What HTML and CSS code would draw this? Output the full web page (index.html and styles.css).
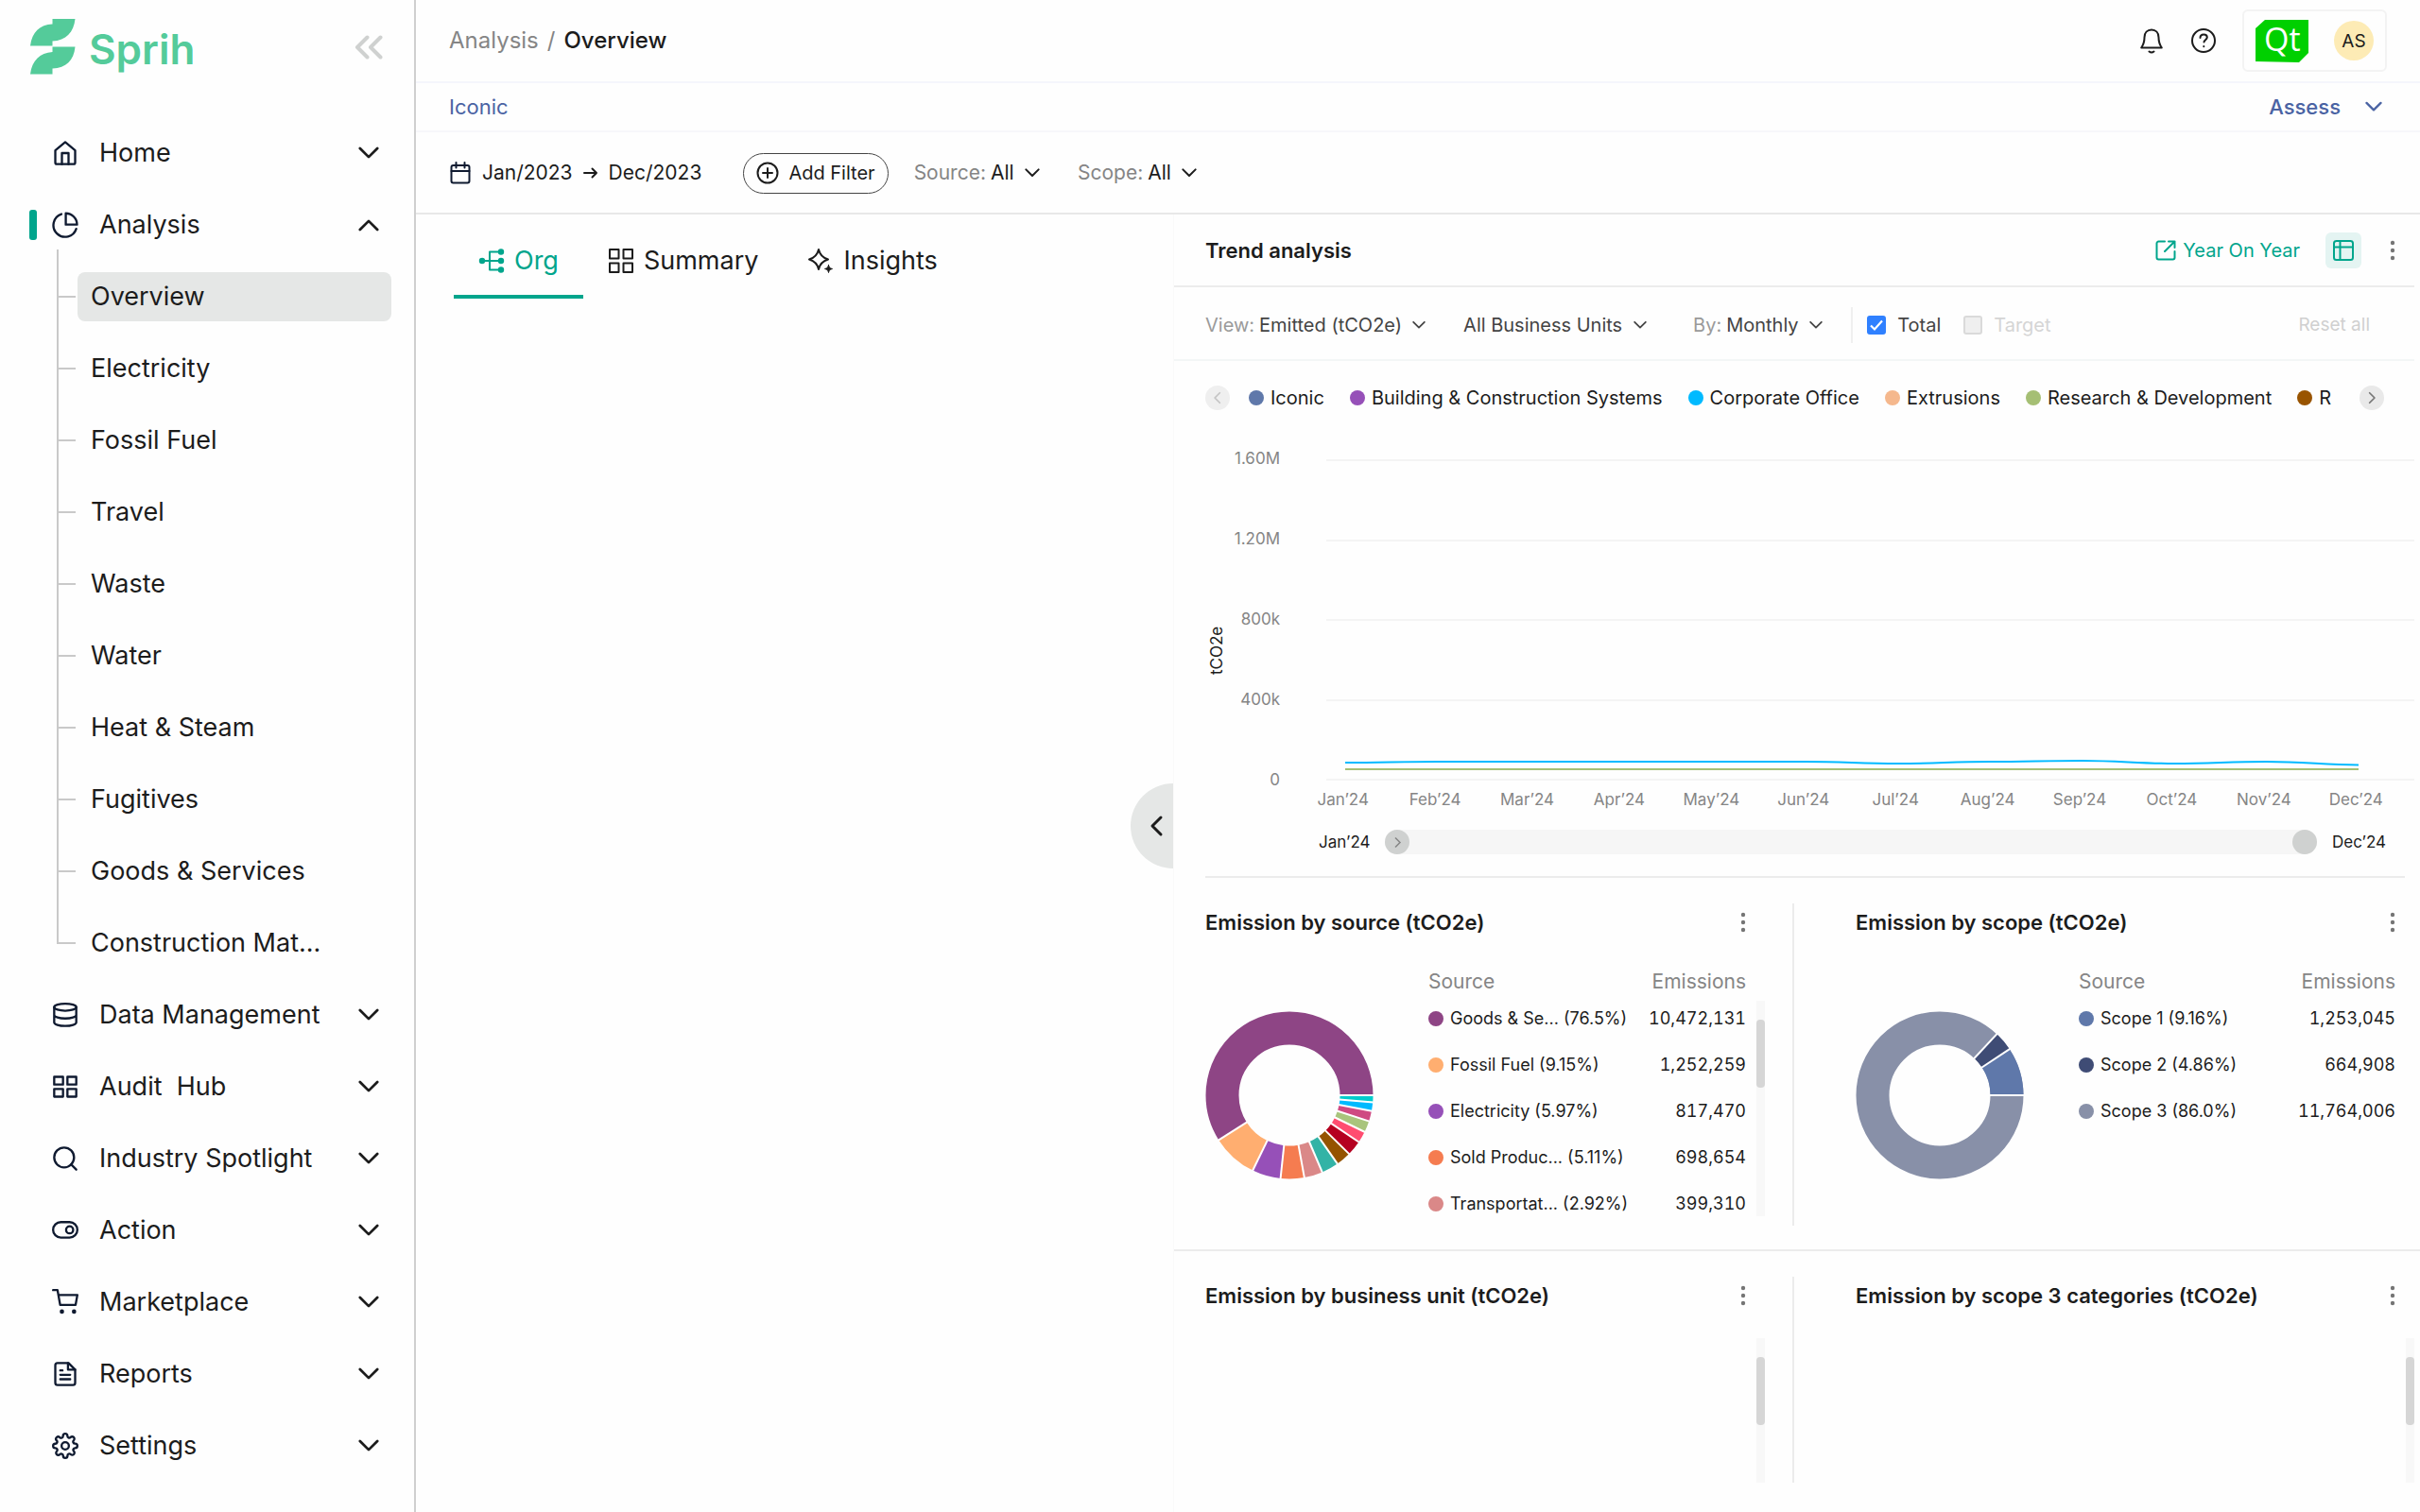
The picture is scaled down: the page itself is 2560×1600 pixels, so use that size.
FILE: index.html
```html
<!DOCTYPE html>
<html lang="en">
<head>
<meta charset="utf-8">
<meta name="viewport" content="width=device-width, initial-scale=1">
<title>Sprih – Analysis Overview</title>
<link rel="stylesheet" href="styles.css">
</head>
<body>
<svg class="sprite" aria-hidden="true">
  <symbol id="chev" viewBox="0 0 24 24"><path d="M2 6.500l10 10 10-10"/></symbol>
  <symbol id="chev-up" viewBox="0 0 24 24"><path d="M2 17.500l10-10 10 10"/></symbol>
  <symbol id="chev-right" viewBox="0 0 24 24"><path d="M8 3l9 9-9 9"/></symbol>
  <symbol id="chev-left" viewBox="0 0 24 24"><path d="M16 3l-9 9 9 9"/></symbol>
  <symbol id="grid" viewBox="0 0 24 24"><path d="M2 3h8v7H2zM14 3h8v7h-8zM14 14h8v7h-8zM2 14h8v7H2z"/></symbol>
  <symbol id="dots" viewBox="0 0 8 24"><g fill="currentColor" stroke="none"><circle cx="4" cy="4" r="2.200"/><circle cx="4" cy="12" r="2.200"/><circle cx="4" cy="20" r="2.200"/></g></symbol>
</svg>
<div class="app">
  <aside class="sidebar">
    <div class="brand">
      <a class="logo" href="#">
        <svg class="logo-mark" viewBox="0 0 48 60" aria-hidden="true"><path d="M0 28.500C2 14 10 6 23.500 5.500V0H47.500C46 14 38 23 23.500 23.500V28.500Z"/><path d="M0 58.500C2 44 10 36 23.500 35V29.500H47.500C46 44 38 52 23.500 52.500V58.500Z"/></svg>
        <span>Sprih</span>
      </a>
      <button class="icon-btn collapse" aria-label="Collapse menu"><svg viewBox="0 0 30 26"><path d="M13.500 2.500L3 13l10.500 10.500M27.500 2.500L17 13l10.500 10.500"/></svg></button>
    </div>
    <nav>
      <ul class="nav">
        <li><a class="nav-row" href="#"><svg class="ni" viewBox="0 0 24 24"><path d="M3 9.500L12 2l9 7.500v11a1.500 1.500 0 0 1-1.500 1.500h-15A1.500 1.500 0 0 1 3 20.500z"/><path d="M9 22V12h6v10"/></svg><span>Home</span><svg class="nc"><use href="#chev"/></svg></a></li>
        <li>
          <a class="nav-row active" href="#"><svg class="ni" viewBox="0 0 24 24"><path d="M22 15.500A10.600 10.600 0 1 1 8.500 2.200"/><path d="M12.500 1.500A10.200 10.200 0 0 1 22.700 11.700H12.500z"/></svg><span>Analysis</span><svg class="nc"><use href="#chev-up"/></svg></a>
          <ul class="sub">
            <li><a class="current" href="#">Overview</a></li>
            <li><a href="#">Electricity</a></li>
            <li><a href="#">Fossil Fuel</a></li>
            <li><a href="#">Travel</a></li>
            <li><a href="#">Waste</a></li>
            <li><a href="#">Water</a></li>
            <li><a href="#">Heat &amp; Steam</a></li>
            <li><a href="#">Fugitives</a></li>
            <li><a href="#">Goods &amp; Services</a></li>
            <li><a href="#">Construction Mat...</a></li>
          </ul>
        </li>
        <li><a class="nav-row" href="#"><svg class="ni" viewBox="0 0 24 24"><ellipse cx="12" cy="5" rx="10" ry="3.200"/><path d="M22 12c0 1.700-4.500 3.200-10 3.200S2 13.700 2 12M2 5v13.800c0 1.700 4.500 3.200 10 3.200s10-1.500 10-3.200V5"/></svg><span>Data Management</span><svg class="nc"><use href="#chev"/></svg></a></li>
        <li><a class="nav-row" href="#"><svg class="ni"><use href="#grid"/></svg><span class="keep">Audit  Hub</span><svg class="nc"><use href="#chev"/></svg></a></li>
        <li><a class="nav-row" href="#"><svg class="ni" viewBox="0 0 24 24"><circle cx="11" cy="11" r="9"/><path d="M22 22l-4.700-4.700"/></svg><span>Industry Spotlight</span><svg class="nc"><use href="#chev"/></svg></a></li>
        <li><a class="nav-row" href="#"><svg class="ni" viewBox="0 0 24 24"><rect x="1" y="4.500" width="22" height="14" rx="7"/><circle cx="16" cy="11.500" r="3.200"/></svg><span>Action</span><svg class="nc"><use href="#chev"/></svg></a></li>
        <li><a class="nav-row" href="#"><svg class="ni" viewBox="0 0 24 24"><path d="M1 1h4l2.400 13.500h14L23 5.500H6"/><circle cx="9" cy="20.500" r="1"/><circle cx="20" cy="20.500" r="1"/></svg><span>Marketplace</span><svg class="nc"><use href="#chev"/></svg></a></li>
        <li><a class="nav-row" href="#"><svg class="ni" viewBox="0 0 24 24"><path d="M15 2H5a2 2 0 0 0-2 2v16a2 2 0 0 0 2 2h14a2 2 0 0 0 2-2V8z"/><path d="M14.500 2v6H21M16.500 12.700h-9M16.500 16.700h-9M9.500 8.700h-2"/></svg><span>Reports</span><svg class="nc"><use href="#chev"/></svg></a></li>
        <li><a class="nav-row" href="#"><svg class="ni" viewBox="0 0 24 24"><circle cx="12" cy="12" r="3.300"/><path d="M19.400 15a1.650 1.650 0 0 0 .33 1.820l.06.060a2 2 0 1 1-2.830 2.830l-.06-.060a1.650 1.650 0 0 0-1.820-.33 1.650 1.650 0 0 0-1 1.510V21a2 2 0 0 1-4 0v-.09A1.650 1.650 0 0 0 9 19.400a1.650 1.650 0 0 0-1.820.33l-.06.060a2 2 0 1 1-2.830-2.830l.06-.060a1.650 1.650 0 0 0 .33-1.820 1.650 1.650 0 0 0-1.510-1H3a2 2 0 0 1 0-4h.09A1.650 1.650 0 0 0 4.600 9a1.650 1.650 0 0 0-.33-1.820l-.06-.060a2 2 0 1 1 2.830-2.830l.06.060a1.650 1.650 0 0 0 1.820.33H9a1.650 1.650 0 0 0 1-1.510V3a2 2 0 0 1 4 0v.09a1.650 1.650 0 0 0 1 1.510 1.650 1.650 0 0 0 1.820-.33l.06-.060a2 2 0 1 1 2.830 2.830l-.06.060a1.650 1.650 0 0 0-.33 1.820V9a1.650 1.650 0 0 0 1.510 1H21a2 2 0 0 1 0 4h-.09a1.650 1.650 0 0 0-1.510 1z"/></svg><span>Settings</span><svg class="nc"><use href="#chev"/></svg></a></li>
      </ul>
    </nav>
  </aside>

  <main class="main">
    <header class="topbar">
      <div class="crumbs"><a href="#">Analysis</a><span class="slash">/</span><span class="here">Overview</span></div>
      <div class="top-tools">
        <button class="icon-btn" aria-label="Notifications"><svg class="i28" viewBox="0 0 28 28"><path d="M14 2.500c-4.500 0-7.500 3.200-7.500 8 0 5-1.200 8-3.300 11h21.600c-2.100-3-3.300-6-3.300-11 0-4.800-3-8-7.500-8z"/><path d="M11.500 25.500q2.500 2 5 0"/></svg></button>
        <button class="icon-btn" aria-label="Help"><svg class="i28" viewBox="0 0 28 28"><circle cx="14" cy="14" r="12"/><path d="M10.500 11c0-2.200 1.600-3.600 3.700-3.600s3.600 1.300 3.600 3.200c0 2.400-3.300 2.900-3.300 5M14.300 20v.200"/></svg></button>
        <div class="account">
          <svg class="qt" viewBox="0 0 56 45" role="img" aria-label="Qt"><path fill="#00d000" d="M10 0H56V35L46 45L0 44V9Z"/><text x="9" y="33" font-size="34" fill="#fff">Qt</text></svg>
          <span class="avatar">AS</span>
        </div>
      </div>
    </header>
    <div class="entity">
      <a href="#">Iconic</a>
      <button class="assess">Assess<svg class="c18"><use href="#chev"/></svg></button>
    </div>
    <div class="filters">
      <button class="date"><svg class="cal" viewBox="0 0 24 24"><rect x="2.500" y="4" width="19" height="18.500" rx="2"/><path d="M2.500 10h19M7.500 1v5.500M16.500 1v5.500"/></svg><span>Jan/2023</span><svg class="arrow" viewBox="0 0 16 14"><path d="M1 7h13M9.500 2.500L14 7l-4.500 4.500"/></svg><span>Dec/2023</span></button>
      <button class="add"><svg class="i24" viewBox="0 0 24 24"><circle cx="12" cy="12" r="10.500"/><path d="M12 7v10M7 12h10"/></svg>Add Filter</button>
      <label class="pick dark"><span>Source:</span><select><option>All</option></select><svg class="c16"><use href="#chev"/></svg></label>
      <label class="pick dark"><span>Scope:</span><select><option>All</option></select><svg class="c16"><use href="#chev"/></svg></label>
    </div>

    <div class="body">
      <section class="left">
        <div class="tabs" role="tablist">
          <button class="tab on" role="tab" aria-selected="true"><svg class="i28" viewBox="0 0 28 28"><path d="M4 14h20M22 4.500H12v19h10"/><g fill="currentColor"><circle cx="4" cy="14" r="2.200"/><circle cx="24" cy="4.500" r="2.200"/><circle cx="24" cy="14" r="2.200"/><circle cx="24" cy="23.500" r="2.200"/></g></svg>Org</button>
          <button class="tab" role="tab" aria-selected="false"><svg class="i28" viewBox="0 0 28 28"><path d="M2 2h9.500v9.500H2zM16.500 2H26v9.500h-9.500zM16.500 16.500H26V26h-9.500zM2 16.500h9.500V26H2z"/></svg>Summary</button>
          <button class="tab" role="tab" aria-selected="false"><svg class="i28" viewBox="0 0 28 28"><path d="M12 2c1.300 6 4 8.700 10 10.500-6 1.800-8.700 4.500-10 10.500-1.300-6-4-8.700-10-10.500C8 10.700 10.700 8 12 2z"/><path fill="currentColor" stroke-width="1" d="M22.500 18.500c.5 2.600 1.400 3.500 4 4-2.600.5-3.500 1.400-4 4-.5-2.600-1.400-3.500-4-4 2.600-.5 3.500-1.400 4-4z"/></svg>Insights</button>
        </div>
        <button class="handle" aria-label="Collapse panel"><svg class="i24"><use href="#chev-left"/></svg></button>
      </section>

      <section class="right">
        <div class="trend-head">
          <h2>Trend analysis</h2>
          <a class="yoy" href="#"><svg class="i24" viewBox="0 0 24 24"><path d="M11 2.500H4.500a2 2 0 0 0-2 2v15a2 2 0 0 0 2 2h15a2 2 0 0 0 2-2V13M15 2.500h6.500V9M21.500 2.500L11 13"/></svg>Year On Year</a>
          <button class="table-btn" aria-label="Table view"><svg class="i24" viewBox="0 0 24 24"><rect x="2" y="2" width="20" height="20" rx="2.500"/><path d="M2 8.500h20M8.500 2v20"/></svg></button>
          <button class="icon-btn more" aria-label="More"><svg class="dots"><use href="#dots"/></svg></button>
        </div>
        <div class="controls">
          <label class="pick"><span>View:</span><select><option>Emitted (tCO2e)</option></select><svg class="c14"><use href="#chev"/></svg></label>
          <label class="pick"><select aria-label="Business units"><option>All Business Units</option></select><svg class="c14"><use href="#chev"/></svg></label>
          <label class="pick by"><span>By:</span><select><option>Monthly</option></select><svg class="c14"><use href="#chev"/></svg></label>
          <div class="checks">
            <label class="check"><input type="checkbox" checked>Total</label>
            <label class="check off"><input type="checkbox" disabled>Target</label>
          </div>
          <button class="reset" disabled>Reset all</button>
        </div>
        <div class="legend">
          <button class="round dim" aria-label="Previous"><svg class="c14"><use href="#chev-left"/></svg></button>
          <ul>
            <li><i class="dot c-iconic"></i>Iconic</li>
            <li><i class="dot c-build"></i>Building &amp; Construction Systems</li>
            <li><i class="dot c-corp"></i>Corporate Office</li>
            <li><i class="dot c-extr"></i>Extrusions</li>
            <li><i class="dot c-rd"></i>Research &amp; Development</li>
            <li><i class="dot c-r"></i>R</li>
          </ul>
          <button class="round" aria-label="Next"><svg class="c14"><use href="#chev-right"/></svg></button>
        </div>

        <div class="chart">
          <div class="axis-title">tCO2e</div>
          <div class="y-axis"><span>1.60M</span><span>1.20M</span><span>800k</span><span>400k</span><span>0</span></div>
          <div class="plot">
            <div class="grid-lines"><i></i><i></i><i></i><i></i></div>
            <svg class="series" viewBox="0 0 1100 340" preserveAspectRatio="none" aria-hidden="true">
              <path stroke="#a5bf74" d="M0 328H1100"/>
              <path stroke="#00baff" d="M0 321C40 321 60 320 100 320H500C540 320 560 322 600 322S660 320 700 320S760 319 800 319S860 322 900 322S960 320 1000 320S1060 323 1100 323.500"/>
            </svg>
          </div>
        </div>
        <div class="x-axis"><span>Jan’24</span><span>Feb’24</span><span>Mar’24</span><span>Apr’24</span><span>May’24</span><span>Jun’24</span><span>Jul’24</span><span>Aug’24</span><span>Sep’24</span><span>Oct’24</span><span>Nov’24</span><span>Dec’24</span></div>
        <div class="range">
          <label for="from">Jan’24</label>
          <div class="sliders">
            <input id="from" class="from" type="range" min="0" max="11" value="0">
            <input id="to" type="range" min="0" max="11" value="11">
          </div>
          <label for="to">Dec’24</label>
        </div>

        <div class="cards">
          <article class="card">
            <header><h2>Emission by source (tCO2e)</h2><button class="icon-btn" aria-label="More"><svg class="dots"><use href="#dots"/></svg></button></header>
            <div class="card-body">
              <svg class="donut" viewBox="-89 -89 178 178" aria-hidden="true">
                <g class="ring">
                  <circle r="71" pathLength="3600" stroke="#8e4585" stroke-dasharray="2124 3600" stroke-dashoffset="-1476"/>
                  <circle r="71" pathLength="3600" stroke="#ffae70" stroke-dasharray="316 3600" stroke-dashoffset="-1160"/>
                  <circle r="71" pathLength="3600" stroke="#9650b8" stroke-dasharray="199 3600" stroke-dashoffset="-961"/>
                  <circle r="71" pathLength="3600" stroke="#f57c50" stroke-dasharray="164 3600" stroke-dashoffset="-797"/>
                  <circle r="71" pathLength="3600" stroke="#da8888" stroke-dasharray="128 3600" stroke-dashoffset="-669"/>
                  <circle r="71" pathLength="3600" stroke="#33b3a6" stroke-dasharray="119 3600" stroke-dashoffset="-550"/>
                  <circle r="71" pathLength="3600" stroke="#955300" stroke-dasharray="105 3600" stroke-dashoffset="-445"/>
                  <circle r="71" pathLength="3600" stroke="#b50020" stroke-dasharray="105 3600" stroke-dashoffset="-340"/>
                  <circle r="71" pathLength="3600" stroke="#ff4d70" stroke-dasharray="80 3600" stroke-dashoffset="-260"/>
                  <circle r="71" pathLength="3600" stroke="#a9c47c" stroke-dasharray="79 3600" stroke-dashoffset="-181"/>
                  <circle r="71" pathLength="3600" stroke="#cf4a82" stroke-dasharray="72 3600" stroke-dashoffset="-109"/>
                  <circle r="71" pathLength="3600" stroke="#00baff" stroke-dasharray="61 3600" stroke-dashoffset="-48"/>
                  <circle r="71" pathLength="3600" stroke="#00cccc" stroke-dasharray="48 3600"/>
                </g>
                <g class="cuts">
                  <path d="M53 0H89"/><path transform="rotate(4.800)" d="M53 0H89"/><path transform="rotate(10.900)" d="M53 0H89"/><path transform="rotate(18.100)" d="M53 0H89"/><path transform="rotate(26)" d="M53 0H89"/><path transform="rotate(34)" d="M53 0H89"/><path transform="rotate(44.500)" d="M53 0H89"/><path transform="rotate(55)" d="M53 0H89"/><path transform="rotate(66.900)" d="M53 0H89"/><path transform="rotate(79.700)" d="M53 0H89"/><path transform="rotate(96.100)" d="M53 0H89"/><path transform="rotate(116)" d="M53 0H89"/><path transform="rotate(147.600)" d="M53 0H89"/>
                </g>
              </svg>
              <table>
                <thead><tr><th>Source</th><th>Emissions</th></tr></thead>
                <tbody>
                  <tr><td><i class="dot c-goods"></i>Goods &amp; Se... (76.5%)</td><td>10,472,131</td></tr>
                  <tr><td><i class="dot c-fossil"></i>Fossil Fuel (9.15%)</td><td>1,252,259</td></tr>
                  <tr><td><i class="dot c-build"></i>Electricity (5.97%)</td><td>817,470</td></tr>
                  <tr><td><i class="dot c-sold"></i>Sold Produc... (5.11%)</td><td>698,654</td></tr>
                  <tr><td><i class="dot c-trans"></i>Transportat... (2.92%)</td><td>399,310</td></tr>
                </tbody>
              </table>
              <div class="scroll"><i></i></div>
            </div>
          </article>
          <article class="card">
            <header><h2>Emission by scope (tCO2e)</h2><button class="icon-btn" aria-label="More"><svg class="dots"><use href="#dots"/></svg></button></header>
            <div class="card-body">
              <svg class="donut" viewBox="-89 -89 178 178" aria-hidden="true">
                <g class="ring">
                  <circle r="71" stroke="#8890a8"/>
                  <circle r="71" pathLength="3600" stroke="#5f78aa" stroke-dasharray="335 3600" stroke-dashoffset="-3265"/>
                  <circle r="71" pathLength="3600" stroke="#3f4c75" stroke-dasharray="135 3600" stroke-dashoffset="-3130"/>
                </g>
                <g class="cuts"><path d="M53 0H89"/><path transform="rotate(-33.500)" d="M53 0H89"/><path transform="rotate(-47)" d="M53 0H89"/></g>
              </svg>
              <table>
                <thead><tr><th>Source</th><th>Emissions</th></tr></thead>
                <tbody>
                  <tr><td><i class="dot c-iconic"></i>Scope 1 (9.16%)</td><td>1,253,045</td></tr>
                  <tr><td><i class="dot c-s2"></i>Scope 2 (4.86%)</td><td>664,908</td></tr>
                  <tr><td><i class="dot c-s3"></i>Scope 3 (86.0%)</td><td>11,764,006</td></tr>
                </tbody>
              </table>
            </div>
          </article>
        </div>
        <div class="cards low">
          <article class="card">
            <header><h2>Emission by business unit (tCO2e)</h2><button class="icon-btn" aria-label="More"><svg class="dots"><use href="#dots"/></svg></button></header>
            <div class="card-body"><div class="scroll"><i></i></div></div>
          </article>
          <article class="card">
            <header><h2>Emission by scope 3 categories (tCO2e)</h2><button class="icon-btn" aria-label="More"><svg class="dots"><use href="#dots"/></svg></button></header>
            <div class="card-body"><div class="scroll"><i></i></div></div>
          </article>
        </div>
      </section>
    </div>
  </main>
</div>
</body>
</html>
```
FILE: styles.css
```css
* { box-sizing: border-box; }
body {
  margin: 0;
  background: #fefefe;
  color: #1c1c1c;
  font: 400 20px/28px Inter, "Liberation Sans", sans-serif;
}
ul { list-style: none; margin: 0; padding: 0; }
a { color: inherit; text-decoration: none; }
button, select, input { font: inherit; color: inherit; margin: 0; }
button { background: none; border: 0; padding: 0; display: flex; align-items: center; }
h2 { margin: 0; font-size: 22px; line-height: 28px; font-weight: 600; white-space: nowrap; }
svg { display: block; flex: none; fill: none; stroke: currentColor; stroke-width: 2; stroke-linecap: round; stroke-linejoin: round; }
.sprite { width: 0; height: 0; position: absolute; }

.i24 { width: 24px; height: 24px; }
.i28 { width: 28px; height: 28px; }
.c14 { width: 14px; height: 14px; stroke-width: 3; }
.c16 { width: 16px; height: 16px; stroke-width: 3; }
.c18 { width: 18px; height: 18px; stroke-width: 3; }
.dots { width: 8px; height: 24px; color: #757575; }

.app { display: grid; grid-template-columns: 440px minmax(0, 1fr); min-height: 100vh; }

/* Sidebar */
.sidebar { border-right: 2px solid #cfcfcf; }
.brand { height: 124px; padding: 20px 32px 0; display: flex; align-items: flex-start; justify-content: space-between; }
.logo { display: flex; gap: 14px; color: #54cb9a; font-size: 44px; line-height: 64px; font-weight: 600; }
.logo-mark { width: 48px; height: 60px; fill: #54cb9a; stroke: none; }
.collapse { color: #cfd1d0; margin: 17px 1px 0 0; }
.collapse svg { width: 30px; height: 26px; stroke-width: 4; }
.nav-row { height: 76px; display: flex; align-items: center; gap: 22px; padding: 0 37px 0 55px; font-size: 27px; line-height: 32px; }
.nav-row span { flex: 1; white-space: nowrap; }
.nav-row .keep { white-space: pre; }
.nav-row.active { padding-left: 31px; }
.nav-row.active::before { content: ""; width: 8px; height: 32px; border-radius: 3px; background: #00a58c; margin-right: -6px; }
.ni { width: 28px; height: 28px; color: #0f1a30; }
.nc { width: 22px; height: 22px; stroke-width: 3; }
.sub { margin: -12px 0 0 60px; padding-top: 12px; background: linear-gradient(#c9c9c9, #c9c9c9) 0 0 / 2px 12px no-repeat; }
.sub li {
  height: 76px;
  padding: 12px 24px 12px 22px;
  background: linear-gradient(#c9c9c9, #c9c9c9) 0 0 / 2px 100% no-repeat, linear-gradient(#c9c9c9, #c9c9c9) 0 50% / 20px 2px no-repeat;
}
.sub li:last-child { background-size: 2px 50%, 20px 2px; }
.sub a { display: block; padding: 10px 14px; border-radius: 8px; font-size: 27px; line-height: 32px; }
.sub .current { background: #e5e7e6; }

/* Header bars */
.main { display: flex; flex-direction: column; min-width: 0; }
.topbar { height: 88px; padding: 0 35px; border-bottom: 2px solid #f5f6fc; display: flex; align-items: center; justify-content: space-between; }
.crumbs { display: flex; gap: 9px; font-size: 24px; color: #858585; }
.crumbs .here { color: #1c1c1c; font-weight: 500; }
.top-tools { display: flex; align-items: center; gap: 27px; }
.account { height: 66px; width: 153px; padding: 0 12px; border: 2px solid #f3f3f3; border-radius: 6px; display: flex; align-items: center; justify-content: space-between; }
.qt { width: 56px; height: 45px; stroke: none; overflow: visible; font-family: "Open Sans", sans-serif; line-height: 1; }
.avatar { width: 42px; height: 42px; border-radius: 50%; background: #fdebb5; font-size: 19px; line-height: 44px; text-align: center; }
.entity { height: 52px; padding: 0 40px 0 35px; border-bottom: 2px solid #f7f7fa; display: flex; align-items: center; justify-content: space-between; color: #4a63a3; font-size: 22px; }
.assess { gap: 26px; font-weight: 500; }
.filters { height: 87px; padding: 1px 35px 0; border-bottom: 2px solid #e8e8e8; display: flex; align-items: center; font-size: 21px; }
.date { gap: 11px; margin-right: 44px; }
.cal { width: 24px; height: 24px; color: #0f1a30; }
.arrow { width: 16px; height: 14px; }
.add { height: 43px; padding: 0 13px; gap: 10px; border: 1px solid #444; border-radius: 22px; margin-right: 27px; font-size: 20px; }
.pick { display: flex; align-items: center; margin-right: 40px; color: #444; white-space: nowrap; }
.pick span { color: #9a9a9a; margin-right: 5px; }
.pick.dark { color: #1c1c1c; }
.pick.dark span { color: #858585; }
.pick select { appearance: none; border: 0; background: none; padding: 0; margin-right: 11px; opacity: 1; }

/* Content split */
.body { flex: 1; display: grid; grid-template-columns: minmax(0, 801fr) minmax(0, 1319fr); }
.left { position: relative; }
.tabs { display: flex; padding: 12px 0 0 40px; }
.tab { height: 77px; padding: 0 26px; gap: 10px; font-size: 27px; line-height: 32px; border-bottom: 4px solid transparent; }
.tab.on { color: #00a58c; border-color: #00a58c; }
.handle { position: absolute; right: 0; top: 602px; width: 45px; height: 90px; padding-left: 16px; border-radius: 45px 0 0 45px; background: #e5e7e6; }
.handle svg { stroke-width: 3; }

.right { border-left: 1px solid #fafafa; }
.trend-head { height: 77px; padding: 0 25px 0 33px; margin-right: 6px; border-bottom: 2px solid #ececec; display: flex; align-items: center; }
.trend-head h2 { flex: 1; }
.yoy { display: flex; align-items: center; gap: 6px; color: #00a58c; margin-right: 27px; }
.table-btn { width: 38px; height: 38px; justify-content: center; border-radius: 6px; background: #e4f4f2; color: #00a58c; }
.more { margin-left: 29px; margin-right: -6px; }
.controls { height: 78px; padding: 3px 47px 0 33px; margin-right: 6px; border-bottom: 2px solid #f3f6f6; display: flex; align-items: center; }
.by { margin-left: 9px; margin-right: 30px; }
.checks { display: flex; gap: 24px; padding-left: 15px; border-left: 2px solid #f0f0f0; height: 38px; align-items: center; }
.check { display: flex; align-items: center; gap: 12px; color: #444; }
.check.off { color: #d5d5d5; }
.check input { appearance: none; width: 20px; height: 20px; border-radius: 3px; background: #efefef; border: 2px solid #dadada; }
.check input:checked { border: 0; background: #2f80ff url("data:image/svg+xml,%3Csvg xmlns='http://www.w3.org/2000/svg' viewBox='0 0 20 20'%3E%3Cpath d='M4 10.500l4 4L16 5.500' fill='none' stroke='white' stroke-width='2.200'/%3E%3C/svg%3E"); }
.reset { margin-left: auto; font-size: 19px; color: #d0d0d0; }
.legend { height: 78px; padding: 0 38px 0 33px; display: flex; align-items: center; gap: 20px; }
.legend ul { flex: 1; display: flex; gap: 27px; overflow: hidden; white-space: nowrap; }
.legend li { display: flex; align-items: center; gap: 7px; }
.round { width: 26px; height: 26px; border-radius: 50%; background: #e9e9e9; color: #777; justify-content: center; flex: none; }
.round.dim { background: #efefef; color: #c4c4c4; }
.dot { display: inline-block; width: 16px; height: 16px; border-radius: 50%; flex: none; }
.c-iconic { background: #5f78aa; }
.c-build { background: #9650b8; }
.c-corp { background: #00baff; }
.c-extr { background: #f5b88d; }
.c-rd { background: #a5bf74; }
.c-r { background: #995400; }
.c-goods { background: #8e4585; }
.c-fossil { background: #ffae70; }
.c-sold { background: #f57c50; }
.c-trans { background: #da8888; }
.c-s2 { background: #3f4c75; }
.c-s3 { background: #8890a8; }

/* Trend chart */
.chart { display: grid; grid-template-columns: 28px 51px minmax(0, 1fr); margin-top: 26px; padding: 0 6px 0 33px; }
.axis-title { writing-mode: vertical-rl; transform: rotate(180deg); font-size: 17px; line-height: 24px; padding-top: 112px; }
.y-axis { display: flex; flex-direction: column; justify-content: space-between; align-items: flex-end; margin: -11px 0 -9px; font-size: 17px; line-height: 20px; color: #858585; white-space: nowrap; }
.plot { display: grid; height: 340px; margin-left: 49px; }
.plot > * { grid-area: 1 / 1; }
.grid-lines { display: flex; flex-direction: column; }
.grid-lines i { flex: 1; border-top: 2px solid #f4f4f4; }
.grid-lines i:last-child { border-bottom: 2px solid #f4f4f4; }
.series { width: calc(100% - 79px); height: 340px; margin-left: 20px; stroke-linecap: butt; }
.series path { vector-effect: non-scaling-stroke; }
.x-axis { display: grid; grid-template-columns: repeat(12, minmax(0, 1fr)); margin: 10px 19px 0 130px; font-size: 17px; line-height: 20px; text-align: center; color: #858585; }
.range { display: flex; align-items: center; gap: 16px; margin: 22px 16px 0 33px; padding: 0 20px 23px 120px; border-bottom: 2px solid #ececec; font-size: 17px; line-height: 26px; }
.sliders { flex: 1; display: grid; }
.sliders input { grid-area: 1 / 1; appearance: none; width: 100%; height: 26px; border-radius: 13px; background: none; pointer-events: none; }
.sliders .from { background: #f6f6f6; }
.sliders input::-webkit-slider-thumb { appearance: none; width: 26px; height: 26px; border-radius: 50%; background: #cfd1d0; pointer-events: auto; }
.sliders .from::-webkit-slider-thumb { background: #cfd1d0 url("data:image/svg+xml,%3Csvg xmlns='http://www.w3.org/2000/svg' viewBox='0 0 26 26'%3E%3Cpath d='M11 8.500l5 5-5 5' fill='none' stroke='%23858585' stroke-width='1.500'/%3E%3C/svg%3E"); }

/* Breakdown cards */
.cards { display: grid; grid-template-columns: minmax(0, 656fr) minmax(0, 662fr); margin-top: 27px; padding-bottom: 25px; border-bottom: 2px solid #ececec; }
.card { padding: 0 29px 0 33px; height: 341px; }
.card:first-child { border-right: 2px solid #ececec; }
.card header { display: flex; justify-content: space-between; align-items: center; height: 40px; padding-right: 19px; }
.card + .card { padding: 0 0 0 65px; }
.card + .card header { padding-right: 25px; }
.card-body { display: grid; grid-template-columns: 178px minmax(0, 1fr) 9px; }
.card + .card .card-body { padding-right: 6px; }
.donut { width: 178px; height: 178px; margin-top: 74px; }
.ring { stroke-width: 35; stroke-linecap: butt; }
.cuts { stroke: #fff; stroke-width: 2; stroke-linecap: butt; }
table { border-collapse: collapse; margin: 29px 11px 0 58px; font-size: 18px; align-self: start; white-space: nowrap; }
th { font-weight: 400; font-size: 21px; line-height: 28px; color: #858585; text-align: left; padding: 0; height: 28px; }
td { padding: 0; height: 49px; line-height: 28px; }
th:last-child, td:last-child { text-align: right; }
td:last-child { font-variant-numeric: tabular-nums; }
td .dot { vertical-align: -2px; margin-right: 7px; }
.scroll { grid-column: 3; margin-top: 63px; padding-top: 20px; height: 228px; background: #f8f8f8; }
.scroll i { display: block; height: 72px; border-radius: 4px; background: #d6d6d6; }
.low { border-bottom: 0; padding-bottom: 0; }
.low .card { height: 218px; }
.low .scroll { margin-top: 25px; height: 153px; }
```
